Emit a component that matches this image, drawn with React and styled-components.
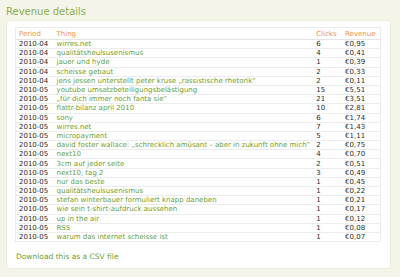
import React from 'react'
import styled, {createGlobalStyle} from 'styled-components'

const GlobalStyle = createGlobalStyle`
    html, body {
        margin: 0;
        padding: 0;
        background: #f5f4e8;
        font-family: "DejaVu Sans", Verdana, sans-serif;
    }
`

const rows = [
    ['2010-04', 'wirres.net', 6, '€0,95'],
    ['2010-04', 'qualitätsheulsusenismus', 4, '€0,41'],
    ['2010-04', 'jauer und hyde', 1, '€0,39'],
    ['2010-04', 'scheisse gebaut', 2, '€0,33'],
    ['2010-04', 'jens jessen unterstellt peter kruse „rassistische rhetorik“', 2, '€0,11'],
    ['2010-05', 'youtube umsatzbeteiligungsbelästigung', 15, '€5,51'],
    ['2010-05', '„für dich immer noch fanta sie“', 21, '€3,51'],
    ['2010-05', 'flattr-bilanz april 2010', 10, '€2,81'],
    ['2010-05', 'sony', 6, '€1,74'],
    ['2010-05', 'wirres.net', 7, '€1,43'],
    ['2010-05', 'micropayment', 5, '€1,11'],
    ['2010-05', 'david foster wallace: „schrecklich amüsant – aber in zukunft ohne mich“', 2, '€0,75'],
    ['2010-05', 'next10', 4, '€0,70'],
    ['2010-05', '3cm auf jeder seite', 2, '€0,51'],
    ['2010-05', 'next10, tag 2', 3, '€0,49'],
    ['2010-05', 'nur das beste', 1, '€0,45'],
    ['2010-05', 'qualitätsheulsusenismus', 1, '€0,22'],
    ['2010-05', 'stefan winterbauer formuliert knapp daneben', 1, '€0,21'],
    ['2010-05', 'wie sein t-shirt-aufdruck aussehen', 1, '€0,17'],
    ['2010-05', 'up in the air', 1, '€0,12'],
    ['2010-05', 'RSS', 1, '€0,08'],
    ['2010-05', 'warum das internet scheisse ist', 1, '€0,07'],
]

const App = () => {
    return (
        <Page>
            <GlobalStyle />
            <Title>Revenue details</Title>
            <Panel>
                <Table>
                    <thead>
                        <tr>
                            <Th w={38}>Period</Th>
                            <Th>Thing</Th>
                            <Th w={30}>Clicks</Th>
                            <Th w={36}>Revenue</Th>
                        </tr>
                    </thead>
                    <tbody>
                        {rows.map((r, i) => (
                            <tr key={i}>
                                <Td>{r[0]}</Td>
                                <Td thing>{r[1]}</Td>
                                <Td>{r[2]}</Td>
                                <Td>{r[3]}</Td>
                            </tr>
                        ))}
                    </tbody>
                </Table>
                <Download href="#">Download this as a CSV file</Download>
            </Panel>
        </Page>
    )
}
export default App

const Page = styled.div`
    width: 400px;
    height: 277px;
    padding: 6px 9px 0 6px;
    box-sizing: border-box;
    display: flex;
    flex-direction: column;
`

const Title = styled.h1`
    margin: 0 0 3px 0;
    font-size: 10px;
    line-height: 11px;
    font-weight: normal;
    color: #8ab14a;
`

const Panel = styled.section`
    background: #ffffff;
    border: 1px solid #ecebdf;
    border-radius: 4px;
    padding: 6px 9px 7px 8px;
    display: flex;
    flex-direction: column;
    gap: 10px;
`

const Table = styled.table`
    width: 100%;
    border-collapse: collapse;
    border: 1px solid #ebebeb;
    font-size: 7px;
    white-space: nowrap;
`

const Th = styled.th`
    text-align: left;
    font-weight: normal;
    color: #f7943a;
    height: 11px;
    padding: 0 3px;
    border-bottom: 1px solid #e4e4e4;
    width: ${p => (p.w ? p.w + 'px' : 'auto')};
`

const Td = styled.td`
    height: 8.2px;
    line-height: 8px;
    padding: 0 3px;
    border-bottom: 1px solid #ececec;
    color: ${p => (p.thing ? '#6aa032' : '#2a2a2a')};
`

const Download = styled.a`
    font-size: 7.5px;
    color: #6aa032;
    text-decoration: none;
    padding-left: 1px;
`
